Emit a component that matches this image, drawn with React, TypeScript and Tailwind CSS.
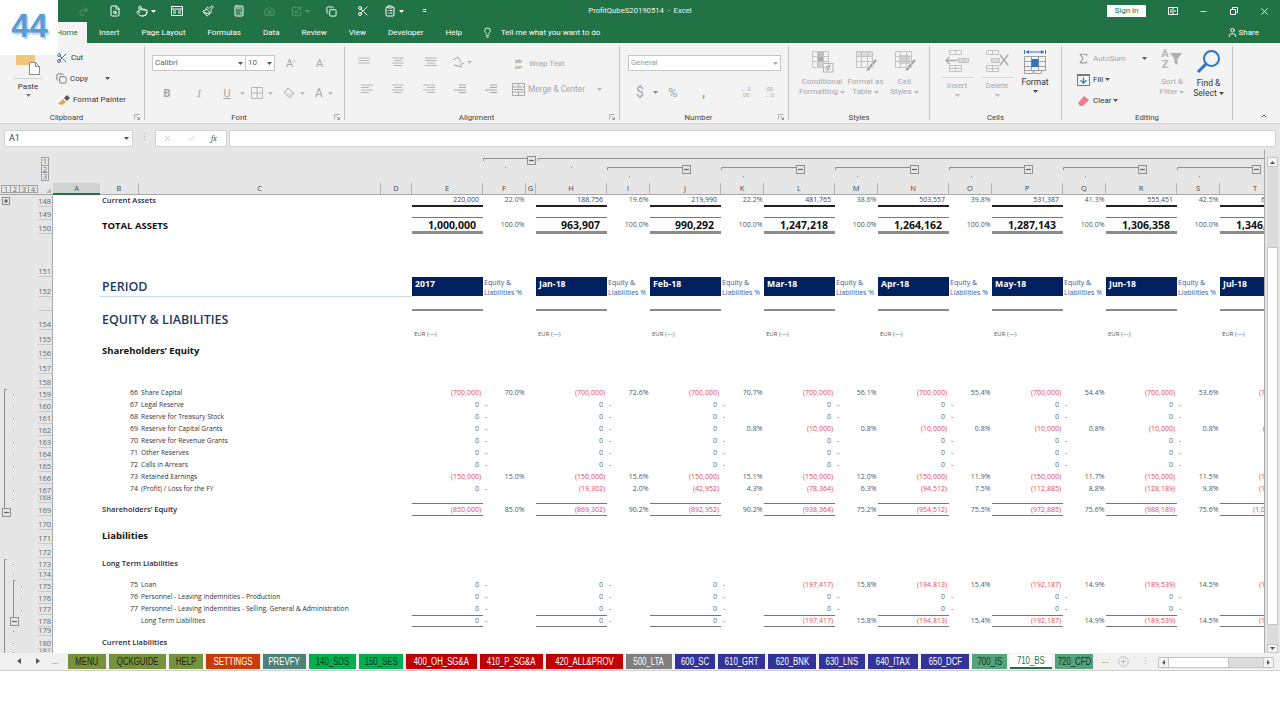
import React from 'react';
import {
  Scissors, Redo2, FileSearch, Pointer, Paintbrush, Calculator, Camera, Scaling, Copy, ClipboardList, Lightbulb, User,
  X, Minus, ChevronUp, Check, Sigma, ArrowDown,
} from 'lucide-react';

const GRID =
  'grid w-[1238px] shrink-0 grid-cols-[47px_39px_242px_31px_71px_43px_10px_71px_43px_71px_43px_71px_43px_71px_43px_71px_43px_71px_43px_71px]';
const DIS = 'text-[#a6a6a6]';

function Caret({ c = '#777' }: { c?: string }) {
  return (
    <svg width="5" height="3" viewBox="0 0 5 3" className="shrink-0">
      <path d="M0 0h5L2.5 3z" fill={c} />
    </svg>
  );
}

function Lines({ r, c = '#b4b4b4' }: { r: number[][]; c?: string }) {
  return (
    <svg width="14" height="11" viewBox="0 0 14 11">
      {r.map((p, i) => (
        <path key={i} d={`M${p[0]} ${i * 2.5 + 1}H${p[1]}`} stroke={c} strokeWidth="1" />
      ))}
    </svg>
  );
}

function Launcher() {
  return (
    <svg width="6" height="6" viewBox="0 0 6 6" className="absolute right-[4px] top-[3px]">
      <path d="M.5 5.5v-5h5" fill="none" stroke="#b0b0b0" />
      <path d="M2.5 2.5l3 3M5.5 3.5v2h-2" fill="none" stroke="#909090" />
    </svg>
  );
}

function Group({ w, label, launcher, children }: { w: string; label: string; launcher?: boolean; children: React.ReactNode }) {
  return (
    <div className={`${w} shrink-0 flex flex-col border-r border-[#c6c6c6]`}>
      <div className="flex-1 min-h-0">{children}</div>
      <div className={`relative h-[12px] mb-[-3px] text-center text-[7.8px] leading-[14px] text-[#444] ${launcher ? 'pr-[11px]' : ''}`}>
        {label}
        {launcher && <Launcher />}
      </div>
    </div>
  );
}

function TableBase({ children, stroke = '#c4c4c4', w = 24, h = 24 }: { children?: React.ReactNode; stroke?: string; w?: number; h?: number }) {
  return (
    <svg width={w} height={h} viewBox="0 0 24 24">
      {children}
      <path d="M2.5 2.5h16v16h-16zM2.5 7.5h16M2.5 12.5h16M7.5 2.5v16M13.5 2.5v16" fill="none" stroke={stroke} />
    </svg>
  );
}

function CondIcon() {
  return (
    <TableBase>
      <rect x="8" y="3" width="5" height="4" fill="#bdbdbd" />
      <rect x="8" y="8" width="5" height="4" fill="#a9a9a9" />
      <rect x="8" y="13" width="5" height="5" fill="#cfcfcf" />
      <rect x="13.5" y="14.5" width="9.5" height="8.5" fill="#f3f3f3" stroke="#b0b0b0" />
      <path d="M16 17.5h4.5M16 20h4.5M20 16l-3 6" stroke="#8f8f8f" fill="none" strokeWidth=".8" />
    </TableBase>
  );
}

function BrushTable({ solid }: { solid?: boolean }) {
  return (
    <TableBase>
      {solid ? (
        <rect x="6" y="6" width="11" height="9" fill="#cfcfcf" />
      ) : (
        <rect x="3" y="3" width="15" height="4.5" fill="#dcdcdc" />
      )}
      <path d="M22 11l-7 8" stroke="#a0a0a0" strokeWidth="2.2" />
      <path d="M15 18l-3 4 4-1.5z" fill="#8f8f8f" />
    </TableBase>
  );
}

function InsertIcon() {
  return (
    <svg width="26" height="24" viewBox="0 0 26 24">
      <path d="M5.5 1.5h12v4h-12zM11.5 1.5v4M5.5 16.5h12v6h-12zM5.5 19.5h12M11.5 16.5v6" fill="none" stroke="#c2c2c2" />
      <path d="M14.5 9.5h10v4h-10zM19.5 9.5v4" fill="#dcdcdc" stroke="#c2c2c2" />
      <path d="M13 11.5H2M5.5 8L2 11.5 5.5 15" fill="none" stroke="#a8a8a8" strokeWidth="1.4" />
    </svg>
  );
}

function DeleteIcon() {
  return (
    <svg width="26" height="24" viewBox="0 0 26 24">
      <path d="M2.5 1.5h12v4h-12zM8.5 1.5v4M2.5 16.5h12v6h-12zM2.5 19.5h12M8.5 16.5v6" fill="none" stroke="#c2c2c2" />
      <path d="M7.5 9.5h8v4h-8z" fill="#dcdcdc" stroke="#c2c2c2" />
      <path d="M16 6l8 10M24 6l-8 10" stroke="#a8a8a8" strokeWidth="1.4" />
    </svg>
  );
}

function FormatIcon() {
  return (
    <svg width="24" height="26" viewBox="0 0 24 26">
      <path d="M1.5 1v4M22.5 1v4M3 3h18" stroke="#2f75b5" fill="none" />
      <path d="M3 3l3-2v4zM21 3l-3-2v4z" fill="#2f75b5" />
      <path d="M1.5 7.5h21v14h-21zM1.5 12.5h21M1.5 17.5h21M8.5 7.5v14M15.5 7.5v14" fill="none" stroke="#8a8a8a" strokeWidth=".8" />
      <rect x="8.5" y="10" width="7" height="8" fill="#2f75b5" />
      <path d="M1.5 21.5v3h8l1-3M11 21.5v3h7l1-3" fill="none" stroke="#8a8a8a" strokeWidth=".8" />
    </svg>
  );
}

function ClipIcon() {
  return (
    <svg width="26" height="29" viewBox="0 0 26 29">
      <rect x="1" y="0" width="19" height="19" fill="#f0c67a" />
      <path d="M14.5 16.5h6l4 4v8h-10z" fill="#fff" stroke="#8a8a8a" />
      <path d="M20.5 16.5v4h4" fill="none" stroke="#8a8a8a" />
    </svg>
  );
}

function Painter() {
  return (
    <svg width="14" height="12" viewBox="0 0 14 12">
      <path d="M1 10l5-5 3 3-4 3z" fill="#e0a84a" />
      <path d="M7 4l3-3 3 3-3 3z" fill="#555" />
    </svg>
  );
}

function Magnifier() {
  return (
    <svg width="26" height="26" viewBox="0 0 26 26">
      <circle cx="15.5" cy="9.5" r="7.5" fill="none" stroke="#2f75b5" strokeWidth="2" />
      <path d="M10 15L2 23" stroke="#2f75b5" strokeWidth="3" />
    </svg>
  );
}

function SortIcon() {
  return (
    <div className="flex items-start h-[24px]">
      <div className="text-[11px] leading-[11px] font-bold text-[#b5b5b5] text-center">
        A<br />Z
      </div>
      <svg width="14" height="14" viewBox="0 0 14 14" className="mt-[4px]">
        <path d="M1 1h12L8.5 7v6L5.5 11V7z" fill="#b0b0b0" />
      </svg>
    </div>
  );
}

function Ribbon() {
  return (
    <div className="flex h-[81px] shrink-0 bg-[#f3f3f3] py-[3px] border-b border-[#d4d4d4] font-['Roboto',sans-serif]">
      <Group w="w-[145px]" label="Clipboard" launcher>
        <div className="flex h-full">
          <div className="w-[56px] flex flex-col items-center">
            <ClipIcon />
            <div className="w-[30px] h-px bg-[#d4d4d4] mt-[3px]" />
            <div className="text-[8px] leading-[11px] text-[#333] mt-[2px]">Paste</div>
            <div className="mt-[2px]"><Caret /></div>
          </div>
          <div className="flex flex-col pt-[1px] text-[8px] text-[#333]">
            <div className="h-[21px] flex items-center gap-[3px]">
              <Scissors size={12} className="text-[#3f6ea0]" /> <span>Cut</span>
            </div>
            <div className="h-[21px] flex items-center gap-[3px]">
              <Copy size={11} className="text-[#777]" /> <span>Copy</span>
              <span className="ml-[14px]"><Caret c="#555" /></span>
            </div>
            <div className="h-[21px] flex items-center gap-[1px]">
              <span className="ml-[1px]"><Painter /></span> <span className="ml-[1px]">Format Painter</span>
            </div>
          </div>
        </div>
      </Group>

      <Group w="w-[200px]" label="Font" launcher>
        <div className="flex pt-[9px] pl-[7px] items-center">
          <div className="w-[94px] h-[16px] bg-white border border-[#c6c6c6] flex items-center justify-between px-[2px] text-[8px] text-[#666]">
            Calibri <Caret c="#555" />
          </div>
          <div className="w-[29px] h-[16px] bg-white border border-l-0 border-[#c6c6c6] flex items-center justify-between px-[2px] text-[8px] text-[#666]">
            10 <Caret c="#555" />
          </div>
          <div className={`ml-[11px] w-[30px] text-[11px] leading-none ${DIS}`}>A<sup className="text-[5px]">^</sup></div>
          <div className={`w-[20px] text-[11px] leading-none ${DIS}`}>A<sup className="text-[5px]">ˇ</sup></div>
        </div>
        <div className={`flex items-center mt-[12px] h-[20px] ${DIS}`}>
          <div className="ml-[6px] w-[32px] text-center text-[11px] font-bold leading-none">B</div>
          <div className="w-[32px] text-center text-[11px] italic font-serif leading-none">I</div>
          <div className="w-[24px] text-center text-[11px] underline leading-none">U</div>
          <span className="ml-[1px]"><Caret c="#bbb" /></span>
          <svg width="12" height="12" viewBox="0 0 12 12" className="ml-[6px]">
            <path d="M.5.5h11v11H.5zM6 .5v11M.5 6h11" fill="none" stroke="#b8b8b8" />
          </svg>
          <span className="ml-[5px]"><Caret c="#bbb" /></span>
          <svg width="13" height="12" viewBox="0 0 13 12" className="ml-[10px]">
            <path d="M5 1l6 5-4 5-6-5z" fill="none" stroke="#aaa" />
            <path d="M1 6h9l-3 5z" fill="#ddd" />
          </svg>
          <span className="ml-[4px]"><Caret c="#bbb" /></span>
          <div className="ml-[10px] text-[12px] leading-none">A</div>
          <span className="ml-[5px]"><Caret c="#bbb" /></span>
        </div>
      </Group>

      <Group w="w-[275px]" label="Alignment" launcher>
        <div className="flex items-center h-[24px] mt-[4px]">
          <div className="ml-[12px] w-[34px]"><Lines r={[[1, 13], [2, 12], [1, 13]]} /></div>
          <div className="w-[33px]"><Lines r={[[1, 13], [3, 11], [1, 13], [3, 11]]} /></div>
          <div className="w-[24px]"><Lines r={[[1, 13], [1, 13], [3, 11], [1, 13]]} /></div>
          <svg width="14" height="12" viewBox="0 0 14 12" className="ml-[3px]">
            <path d="M2 4l5-3 3 6M9 9l4-2" fill="none" stroke="#aaa" />
            <path d="M3 9l8 2" stroke="#999" />
          </svg>
          <span className="ml-[2px]"><Caret c="#bbb" /></span>
          <div className="ml-[43px] mt-[4px] text-[6px] leading-[6px] text-[#999] w-[11px] font-bold">ab<br />c<span className="text-[5px]">↵</span></div>
          <div className={`ml-[3px] mt-[4px] text-[8px] ${DIS}`}>Wrap Text</div>
        </div>
        <div className="flex items-center h-[24px] mt-[3px]">
          <div className="ml-[15px] w-[31px]"><Lines r={[[1, 13], [1, 9], [1, 13], [1, 9]]} /></div>
          <div className="w-[31px]"><Lines r={[[1, 13], [3, 11], [1, 13], [3, 11]]} /></div>
          <div className="w-[31px]"><Lines r={[[1, 13], [5, 13], [1, 13], [5, 13]]} /></div>
          <div className="w-[31px]"><Lines r={[[6, 13], [6, 13], [1, 13], [6, 13]]} c="#a6a6a6" /></div>
          <div className="w-[22px]"><Lines r={[[6, 13], [6, 13], [1, 13], [6, 13]]} c="#a6a6a6" /></div>
          <svg width="13" height="13" viewBox="0 0 13 13" className="ml-[6px]">
            <path d="M.5.5h12v12H.5zM.5 4h12M.5 9h12M6.5.5V4M6.5 9v3.500" fill="none" stroke="#aaa" />
            <path d="M2 6.500h9" stroke="#999" />
          </svg>
          <div className={`ml-[3px] w-[69px] text-[8.3px] ${DIS}`}>Merge &amp; Center</div>
          <Caret c="#bbb" />
        </div>
      </Group>

      <Group w="w-[169px]" label="Number" launcher>
        <div className="ml-[8px] mt-[9px] w-[153px] h-[16px] bg-white border border-[#c6c6c6] flex items-center justify-between px-[2px] text-[7.8px] text-[#9a9a9a]">
          General <Caret c="#aaa" />
        </div>
        <div className={`flex items-center h-[20px] mt-[11px] ${DIS}`}>
          <div className="ml-[16px] w-[17px] text-[14px] leading-none">$</div>
          <Caret c="#888" />
          <div className="ml-[10px] w-[31px] text-[13px] leading-none">%</div>
          <div className="ml-[3px] w-[31px] text-[13px] font-bold leading-none text-[#999]">,</div>
          <div className="w-[31px] text-[5.500px] leading-[6px] text-center pr-[6px]">←.0<br />.00</div>
          <div className="text-[5.500px] leading-[6px] text-center">.00<br />→.0</div>
        </div>
      </Group>

      <Group w="w-[141px]" label="Styles">
        <div className={`flex pt-[3px] pl-[11px] text-[8px] leading-[10px] text-center ${DIS}`}>
          <div className="w-[44px] flex flex-col items-center">
            <CondIcon />
            <div className="mt-[4px]">Conditional</div>
            <div className="flex items-center gap-[2px] whitespace-nowrap">Formatting <Caret c="#bbb" /></div>
          </div>
          <div className="w-[43px] flex flex-col items-center">
            <BrushTable />
            <div className="mt-[4px]">Format as</div>
            <div className="flex items-center gap-[2px]">Table <Caret c="#bbb" /></div>
          </div>
          <div className="w-[35px] flex flex-col items-center">
            <BrushTable solid />
            <div className="mt-[4px]">Cell</div>
            <div className="flex items-center gap-[2px]">Styles <Caret c="#bbb" /></div>
          </div>
        </div>
      </Group>

      <Group w="w-[132px]" label="Cells">
        <div className="flex pt-[3px] pl-[6px] text-[8px] leading-[10px] text-center">
          <div className={`w-[42px] flex flex-col items-center ${DIS}`}>
            <InsertIcon />
            <div className="mt-[4px] w-[31px] border-t border-[#d8d8d8] pt-[3px]">Insert</div>
            <div className="mt-[3px]"><Caret c="#bbb" /></div>
          </div>
          <div className={`w-[38px] flex flex-col items-center ${DIS}`}>
            <DeleteIcon />
            <div className="mt-[4px] w-[31px] border-t border-[#d8d8d8] pt-[3px]">Delete</div>
            <div className="mt-[3px]"><Caret c="#bbb" /></div>
          </div>
          <div className="w-[38px] flex flex-col items-center text-[#333]">
            <FormatIcon />
            <div className="mt-[2px] text-[8.500px]">Format</div>
            <div className="mt-[3px]"><Caret c="#444" /></div>
          </div>
        </div>
      </Group>

      <Group w="w-[171px]" label="Editing">
        <div className="flex h-full">
          <div className="w-[92px] pl-[15px] pt-[2px] text-[8px] text-[#333]">
            <div className={`h-[21px] flex items-center ${DIS}`}>
              <Sigma size={13} className="text-[#a0a0a0]" />
              <span className="ml-[3px] w-[49px]">AutoSum</span>
              <Caret c="#555" />
            </div>
            <div className="h-[21px] flex items-center">
              <span className="w-[13px] h-[12px] border border-[#777] border-t-2 flex items-center justify-center">
                <ArrowDown size={9} strokeWidth={3} className="text-[#2f75b5]" />
              </span>
              <span className="ml-[3px]">Fill</span>
              <span className="ml-[2px]"><Caret c="#555" /></span>
            </div>
            <div className="h-[21px] flex items-center">
              <svg width="13" height="12" viewBox="0 0 13 12">
                <path d="M1 8l6-7 5 4-6 6H3z" fill="#ee7d8c" />
              </svg>
              <span className="ml-[3px]">Clear</span>
              <span className="ml-[2px]"><Caret c="#555" /></span>
            </div>
          </div>
          <div className={`w-[36px] pt-[2px] flex flex-col items-center text-[8px] leading-[10px] text-center ${DIS}`}>
            <SortIcon />
            <div className="mt-[5px]">Sort &amp;</div>
            <div className="flex items-center gap-[2px]">Filter <Caret c="#bbb" /></div>
          </div>
          <div className="w-[37px] pt-[3px] flex flex-col items-center text-[8.500px] leading-[10px] text-center text-[#333]">
            <Magnifier />
            <div className="mt-[3px]">Find &amp;</div>
            <div className="flex items-center gap-[2px]">Select <Caret c="#444" /></div>
          </div>
        </div>
      </Group>

      <div className="flex-1 flex justify-end items-end pr-[12px] mb-[-3px] pb-[3px]">
        <ChevronUp size={8} strokeWidth={3} className="text-[#555]" />
      </div>
    </div>
  );
}

function TitleBar() {
  const qat = 'w-[31px] flex justify-center items-center gap-[3px]';
  return (
    <div className="bg-[#217346] shrink-0 text-white font-['Roboto',sans-serif]">
      <div className="grid grid-cols-[1fr_auto_1fr] h-[22px] items-center">
        <div className="flex pl-[68px] items-center">
          <div className={qat}><Redo2 size={11} className="text-[#5c9a78]" /></div>
          <div className={qat}><FileSearch size={12} /></div>
          <div className={qat}><Pointer size={12} /><Caret c="#fff" /></div>
          <div className={qat}>
            <svg width="12" height="10" viewBox="0 0 12 10"><path d="M.5.5h11v9H.5zM.5 3h11" fill="none" stroke="#fff" /><path d="M2 5h3M7 5h3M2 7h3M7 7h3" stroke="#fff" /></svg>
          </div>
          <div className={qat}><Paintbrush size={12} /></div>
          <div className={qat}><Calculator size={12} /></div>
          <div className={qat}><Camera size={11} className="text-[#5c9a78]" /></div>
          <div className={qat}><Scaling size={11} className="text-[#5c9a78]" /><Caret c="#5c9a78" /></div>
          <div className={qat}><Copy size={11} /></div>
          <div className={qat}><Scissors size={12} /></div>
          <div className={qat}><ClipboardList size={12} /><Caret c="#fff" /></div>
          <div className={qat}><span className="text-[7px] leading-none font-bold">=</span></div>
        </div>
        <div className="text-[7.700px] leading-none text-[#eef5f0] text-center whitespace-pre">ProfitQubeS20190514  -  Excel</div>
        <div className="flex items-center justify-end">
          <div className="w-[39px] h-[12px] bg-white text-[#217346] text-[8px] leading-[12px] text-center">Sign in</div>
          <div className="w-[31px] ml-[11px] flex justify-center">
            <svg width="10" height="8" viewBox="0 0 10 8"><path d="M.5.5h9v7h-9zM5 .5v7" fill="none" stroke="#fff" /><path d="M2 3h2M2 5h2M6 4h2" stroke="#fff" /></svg>
          </div>
          <div className="w-[31px] flex justify-center"><Minus size={9} /></div>
          <div className="w-[30px] flex justify-center">
            <svg width="8" height="8" viewBox="0 0 8 8"><path d="M.5 2.500h5v5h-5zM2.500 2V.5h5v5H6" fill="none" stroke="#fff" /></svg>
          </div>
          <div className="w-[31px] flex justify-center"><X size={11} /></div>
        </div>
      </div>
      <div className="flex h-[21px] pl-[46px] items-center text-[8px] leading-none">
        <div className="w-[41px] h-full bg-[#f3f3f3] text-[#217346] flex items-center justify-center pl-[1px]">Home</div>
        <div className="ml-[12px] flex items-center gap-[22px]">
          <span>Insert</span>
          <span>Page Layout</span>
          <span>Formulas</span>
          <span>Data</span>
          <span>Review</span>
          <span>View</span>
          <span>Developer</span>
          <span>Help</span>
        </div>
        <Lightbulb size={11} className="ml-[20px]" />
        <span className="ml-[8px]">Tell me what you want to do</span>
        <div className="ml-auto mr-[21px] flex items-center gap-[1px]">
          <User size={11} /> <span>Share</span>
        </div>
      </div>
    </div>
  );
}

function FormulaBar() {
  return (
    <div className="h-[26px] shrink-0 flex items-start pt-[6px] pl-[4px] bg-[#e6e6e6] font-['Roboto',sans-serif]">
      <div className="w-[129px] h-[17px] bg-white border border-[#d4d4d4] flex items-center justify-between pl-[4px] pr-[3px] text-[9px] text-[#444]">
        A1 <Caret c="#555" />
      </div>
      <div className="w-[22px] text-center text-[9px] leading-[15px] text-[#aaa]">⋮</div>
      <div className="w-[72px] h-[17px] bg-white border border-[#d4d4d4] flex items-center text-[#aaa]">
        <X size={9} className="ml-[7px]" strokeWidth={1.5} />
        <Check size={9} className="ml-[15px]" strokeWidth={1.5} />
        <span className="ml-[15px] text-[8px] italic font-serif text-[#555]">fx</span>
      </div>
      <div className="w-[1047px] ml-[2px] h-[17px] bg-white border border-[#d4d4d4]" />
    </div>
  );
}

function OutlineBtn({ t, cls }: { t: string; cls: string }) {
  return <div className={`${cls} border border-[#a0a0a0] bg-[#e6e6e6] text-[7px] leading-[7px] text-center text-[#666]`}>{t}</div>;
}

function MinusBox({ x, y }: { x: number; y: number }) {
  return (
    <g>
      <rect x={x + 0.5} y={y + 0.5} width="8" height="8" fill="#e6e6e6" stroke="#8f8f8f" />
      <path d={`M${x + 2} ${y + 4.5}h5`} stroke="#666" strokeWidth="1.2" />
    </g>
  );
}

function Dot({ x, y }: { x: number; y: number }) {
  return <rect x={x} y={y} width="1" height="1" fill="#888" />;
}

function ColOutline() {
  const l2 = [607, 721, 835, 949, 1063, 1177];
  return (
    <svg width="1212" height="33" viewBox="53 150 1212 33" className="block shrink-0">
      <path d="M483.500 161V158.500H527M538 161V158.500H1265" fill="none" stroke="#8f8f8f" />
      <MinusBox x={527} y={156} />
      {l2.map((x) => (
        <g key={x}>
          <path d={`M${x + 0.5} 170V167.500H${x + 75}`} fill="none" stroke="#8f8f8f" />
          <MinusBox x={x + 75} y={165} />
          <Dot x={x + 22} y={176} />
        </g>
      ))}
      <Dot x={505} y={167} />
      <Dot x={571} y={167} />
    </svg>
  );
}

function RowOutline() {
  const d1 = [394, 406, 418, 430, 442, 454, 466, 478, 490, 499, 564, 574, 631, 643, 652];
  return (
    <svg width="38" height="458" viewBox="0 195 38 458" className="block shrink-0">
      <rect x="2.500" y="197.500" width="7" height="7" fill="#e6e6e6" stroke="#8f8f8f" />
      <path d="M4 201h4M6 199v4" stroke="#555" strokeWidth="1.2" />
      <path d="M6.500 389.500H4.500V508" fill="none" stroke="#8f8f8f" />
      <MinusBox x={2} y={508} />
      <path d="M6.500 559.500H4.500V653" fill="none" stroke="#8f8f8f" />
      <path d="M15.500 580.500H13.500V617" fill="none" stroke="#8f8f8f" />
      <MinusBox x={10} y={617} />
      {d1.map((y) => <Dot key={y} x={13} y={y} />)}
      {[586, 598, 610].map((y) => <Dot key={y} x={21} y={y} />)}
    </svg>
  );
}

const COLS = ['A', 'B', 'C', 'D', 'E', 'F', 'G', 'H', 'I', 'J', 'K', 'L', 'M', 'N', 'O', 'P', 'Q', 'R', 'S', 'T'];

function ColHeader() {
  return (
    <div className="flex h-[12px] shrink-0 border-b border-[#a8a8a8]">
      <div className="w-[53px] shrink-0 flex items-start pl-[1px] pt-[2px]">
        <div className="flex">
          {['1', '2', '3', '4'].map((t) => (
            <OutlineBtn key={t} t={t} cls="w-[10px] h-[8px] -ml-px first:ml-0" />
          ))}
        </div>
        <svg width="5" height="5" viewBox="0 0 5 5" className="ml-[8px] mt-[3px]"><path d="M5 0v5H0z" fill="#b8b8b8" /></svg>
      </div>
      <div className={GRID}>
        {COLS.map((c) =>
          c === 'A' ? (
            <div key={c} className="bg-[#d2d2d2] border-b-2 border-[#217346] text-center text-[7.5px] leading-[10px] text-[#217346]">{c}</div>
          ) : (
            <div key={c} className="border-r border-[#b4b4b4] text-center text-[7.5px] leading-[11px] text-[#444]">{c}</div>
          ),
        )}
      </div>
    </div>
  );
}

function Val({ v, big }: { v: string; big?: boolean }) {
  if (big) return <div className="pr-[7px] text-right text-[10.5px] font-bold text-[#111]">{v}</div>;
  if (v.startsWith('EUR')) return <div className="pl-[2px] text-[6px] text-[#555]">{v}</div>;
  if (v.startsWith('(')) return <div className="pr-[2px] text-right text-[#ef4444]">{v}</div>;
  if (v === '0') return <div className="pr-[4px] text-right text-[#5e6b60]">{v}</div>;
  return <div className="pr-[4px] text-right text-[#444]">{v}</div>;
}

type RowProps = {
  n?: string;
  h: string;
  lead?: React.ReactNode;
  leadCls?: string;
  vals?: string[];
  pcts?: string[];
  vc?: string;
  pc?: string;
  big?: boolean;
};

function Label({ n }: { n?: string }) {
  return (
    <div className="w-[15px] shrink-0 border-r border-[#a8a8a8] border-b-[#c8c8c8] border-b flex items-end justify-end pr-[1px] bg-[#e6e6e6] text-[7.5px] leading-[10px] text-[#666] overflow-hidden">
      {n}
    </div>
  );
}

function Row({ n, h, lead, leadCls = '', vals, pcts, vc = '', pc = '', big }: RowProps) {
  return (
    <div className={`flex shrink-0 ${h}`}>
      <Label n={n} />
      <div className={`${GRID} bg-white text-[7px]`}>
        <div className={`col-span-4 whitespace-nowrap ${leadCls}`}>{lead}</div>
        {vals &&
          vals.map((v, i) => (
            <React.Fragment key={i}>
              <div className={`whitespace-nowrap ${vc}`}><Val v={v} big={big} /></div>
              {i < 7 && (
                <div className={`whitespace-nowrap ${pc}`}>
                  {pcts && pcts[i] === '-' ? (
                    <div className="pl-[2px] text-[#555]">-</div>
                  ) : (
                    <div className="pr-[1.5px] text-right text-[#555]">{pcts ? pcts[i] : ''}</div>
                  )}
                </div>
              )}
              {i === 0 && <div />}
            </React.Fragment>
          ))}
      </div>
    </div>
  );
}

function Item({ num, text }: { num?: string; text: string }) {
  return (
    <div className="flex leading-[9px] text-[#333]">
      <div className="w-[86px] pr-[1px] text-right text-[7px]">{num}</div>
      <div className="pl-[2px] text-[6.7px]">{text}</div>
    </div>
  );
}

const Z8 = ['0', '0', '0', '0', '0', '0', '0', '0'];
const D7 = ['-', '-', '-', '-', '-', '-', '-'];
const L = 'leading-[9px]';
const STD = { vc: L, pc: L, vals: Z8, pcts: D7 };
const B8 = 'pl-[49px] text-[7.6px] font-semibold text-[#1f2a44]';
const BOLD10 = 'pl-[49px] text-[9.5px] font-bold text-[#111] leading-[12px]';
const HEAD = 'pl-[49px] text-[12.5px] font-semibold text-[#1f3864]';
const MONTHS = ['2017', 'Jan-18', 'Feb-18', 'Mar-18', 'Apr-18', 'May-18', 'Jun-18', 'Jul-18'];

function PeriodRow() {
  return (
    <div className="flex shrink-0 h-[20px]">
      <Label n="152" />
      <div className={`${GRID} bg-white`}>
        <div className="col-span-4 pl-[47px]">
          <div className="h-[20px] border-b border-[#c5daf0] pl-[2px] text-[12.5px] leading-[20px] font-semibold text-[#1f3864]">PERIOD</div>
        </div>
        {MONTHS.map((m, i) => (
          <React.Fragment key={m}>
            <div className="h-[19px] bg-[#002060] text-white font-bold text-[8.700px] leading-[14px] pl-[3px]">{m}</div>
            {i < 7 && (
              <div className="pl-[1px] pt-[1px] text-[7px] leading-[9.5px] text-[#35609f] whitespace-nowrap">
                Equity &amp;<br />Liabilities %
              </div>
            )}
            {i === 0 && <div />}
          </React.Fragment>
        ))}
      </div>
    </div>
  );
}

function Sheet() {
  const p159 = ['70.0%', '72.6%', '70.7%', '56.1%', '55.4%', '54.4%', '53.6%'];
  const v159 = Array(8).fill('(700,000)') as string[];
  const v166 = Array(8).fill('(150,000)') as string[];
  const v162 = ['0', '0', '0', '(10,000)', '(10,000)', '(10,000)', '(10,000)', '(10,000)'];
  const v175 = ['0', '0', '0', '(197,417)', '(194,813)', '(192,187)', '(189,539)', '(186,843)'];
  const p175 = ['-', '-', '-', '15.8%', '15.4%', '14.9%', '14.5%'];
  const blank = Array(8).fill('') as string[];
  return (
    <div className="flex h-[458px] shrink-0 overflow-hidden">
      <RowOutline />
      <div className="flex flex-col overflow-hidden">
        <Row n="148" h="h-[12px]" lead="Current Assets" leadCls={`${B8} leading-[10px]`}
          vals={['220,000', '188,756', '219,990', '481,765', '503,557', '531,387', '555,451', '603,880']}
          pcts={['22.0%', '19.6%', '22.2%', '38.6%', '39.8%', '41.3%', '42.5%']}
          vc="border-b-2 border-[#222] leading-[10px]" pc="leading-[10px]" />
        <Row n="149" h="h-[13px]" vals={blank} vc="h-[11px] border-b border-[#777]" />
        <Row n="150" h="h-[14px]" lead="TOTAL ASSETS" leadCls="pl-[49px] text-[9.5px] font-bold text-[#111] leading-[12px]"
          big
          vals={['1,000,000', '963,907', '990,292', '1,247,218', '1,264,162', '1,287,143', '1,306,358', '1,346,220']}
          pcts={['100.0%', '100.0%', '100.0%', '100.0%', '100.0%', '100.0%', '100.0%']}
          vc="border-b-[3px] border-[#8c8c8c] leading-[10px]" pc="leading-[9px]" />
        <Row n="151" h="h-[43px]" />
        <PeriodRow />
        <Row h="h-[14px]" vals={blank} vc="border-b-2 border-[#8c8c8c] h-[14px]" />
        <Row n="154" h="h-[19px]" lead="EQUITY & LIABILITIES" leadCls={`${HEAD} leading-[18px]`} />
        <Row n="155" h="h-[15px]" vals={Array(8).fill('EUR (—)') as string[]} vc="leading-[8px]" />
        <Row n="156" h="h-[14px]" lead="Shareholders’ Equity" leadCls={BOLD10} />
        <Row n="157" h="h-[15px]" />
        <Row n="158" h="h-[14px]" />
        <Row n="159" h="h-[12px]" lead={<Item num="66" text="Share Capital" />} {...STD} vals={v159} pcts={p159} />
        <Row n="160" h="h-[12px]" lead={<Item num="67" text="Legal Reserve" />} {...STD} />
        <Row n="161" h="h-[12px]" lead={<Item num="68" text="Reserve for Treasury Stock" />} {...STD} />
        <Row n="162" h="h-[12px]" lead={<Item num="69" text="Reserve for Capital Grants" />} {...STD} vals={v162} pcts={['-', '-', '0.8%', '0.8%', '0.8%', '0.8%', '0.8%']} />
        <Row n="163" h="h-[12px]" lead={<Item num="70" text="Reserve for Revenue Grants" />} {...STD} />
        <Row n="164" h="h-[12px]" lead={<Item num="71" text="Other Reserves" />} {...STD} />
        <Row n="165" h="h-[12px]" lead={<Item num="72" text="Calls in Arrears" />} {...STD} />
        <Row n="166" h="h-[12px]" lead={<Item num="73" text="Retained Earnings" />} {...STD} vals={v166} pcts={['15.0%', '15.6%', '15.1%', '12.0%', '11.9%', '11.7%', '11.5%']} />
        <Row n="167" h="h-[12px]" lead={<Item num="74" text="(Profit) / Loss for the FY" />} {...STD}
          vals={['0', '(19,302)', '(42,952)', '(78,364)', '(94,512)', '(112,885)', '(128,189)', '(148,000)']}
          pcts={['-', '2.0%', '4.3%', '6.3%', '7.5%', '8.8%', '9.8%']} />
        <Row n="168" h="h-[7px]" />
        <Row n="169" h="h-[13px]" lead="Shareholders’ Equity" leadCls={`${B8} leading-[13px]`}
          vals={['(850,000)', '(869,302)', '(892,952)', '(938,364)', '(954,512)', '(972,885)', '(988,189)', '(1,008,000)']}
          pcts={['85.0%', '90.2%', '90.2%', '75.2%', '75.5%', '75.6%', '75.6%']} vc="border-t border-b border-[#777] leading-[11px]" pc="leading-[13px]" />
        <Row n="170" h="h-[14px]" />
        <Row n="171" h="h-[14px]" lead="Liabilities" leadCls={BOLD10} />
        <Row n="172" h="h-[14px]" />
        <Row n="173" h="h-[12px]" lead="Long Term Liabilities" leadCls={`${B8} leading-[10px]`} />
        <Row n="174" h="h-[10px]" />
        <Row n="175" h="h-[12px]" lead={<Item num="75" text="Loan" />} {...STD} vals={v175} pcts={p175} />
        <Row n="176" h="h-[12px]" lead={<Item num="76" text="Personnel - Leaving Indemnities - Production" />} {...STD} />
        <Row n="177" h="h-[11px]" lead={<Item num="77" text="Personnel - Leaving Indemnities - Selling, General & Administration" />} {...STD} />
        <Row n="178" h="h-[12px]" lead={<Item text="Long Term Liabilities" />}
          vals={v175} pcts={p175} vc="border-t border-b border-[#777] leading-[9px]" pc="leading-[11px]" leadCls="pt-[1px]" />
        <Row n="179" h="h-[9px]" />
        <Row n="180" h="h-[13px]" lead="Current Liabilities" leadCls={`${B8} leading-[12px]`} />
        <Row n="181" h="h-[6px]" />
      </div>
    </div>
  );
}

const TABS: [string, string, string][] = [
  ['MENU', 'w-[38px]', 'bg-[#76923c] text-[#1f240f]'],
  ['QCKGUIDE', 'w-[57px]', 'bg-[#76923c] text-[#1f240f]'],
  ['HELP', 'w-[34px]', 'bg-[#76923c] text-[#1f240f]'],
  ['SETTINGS', 'w-[54px]', 'bg-[#cc3a06] text-white'],
  ['PREVFY', 'w-[43px]', 'bg-[#4f8176] text-white'],
  ['140_SDS', 'w-[47px]', 'bg-[#00b050] text-[#10331f]'],
  ['150_SES', 'w-[44px]', 'bg-[#00b050] text-[#10331f]'],
  ['400_OH_SG&A', 'w-[71px]', 'bg-[#c00000] text-white'],
  ['410_P_SG&A', 'w-[63px]', 'bg-[#c00000] text-white'],
  ['420_ALL&PROV', 'w-[77px]', 'bg-[#c00000] text-white'],
  ['500_LTA', 'w-[46px]', 'bg-[#7f7f7f] text-white'],
  ['600_SC', 'w-[40px]', 'bg-[#333399] text-white'],
  ['610_GRT', 'w-[47px]', 'bg-[#333399] text-white'],
  ['620_BNK', 'w-[48px]', 'bg-[#333399] text-white'],
  ['630_LNS', 'w-[46px]', 'bg-[#333399] text-white'],
  ['640_ITAX', 'w-[50px]', 'bg-[#333399] text-white'],
  ['650_DCF', 'w-[48px]', 'bg-[#333399] text-white'],
  ['700_IS', 'w-[35px]', 'bg-[#55a37c] text-[#10331f]'],
  ['710_BS', 'w-[42px]', 'bg-white text-[#217346] border-b-2 border-[#217346]'],
  ['720_CFD', 'w-[38px]', 'bg-[#55a37c] text-[#10331f]'],
];

function SheetTabs() {
  return (
    <div className="h-[18px] shrink-0 flex items-start bg-[#f1f1f1] border-b border-[#cfcfcf] pt-[1px]">
      <div className="w-[68px] shrink-0 h-[14px] flex items-center text-[#555]">
        <svg width="4" height="6" viewBox="0 0 4 6" className="ml-[17px]"><path d="M4 0v6L0 3z" fill="#555" /></svg>
        <svg width="4" height="6" viewBox="0 0 4 6" className="ml-[15px]"><path d="M0 0v6l4-3z" fill="#555" /></svg>
        <span className="ml-[12px] text-[8px] leading-none">...</span>
      </div>
      <div className="flex gap-[3px] w-[1025px] shrink-0 overflow-hidden">
        {TABS.map(([t, w, c]) => (
          <div key={t} className={`${w} ${c} shrink-0 h-[15px] flex items-center justify-center overflow-hidden whitespace-nowrap`}>
            <span className="text-[10px] leading-none scale-x-[0.78] font-['Liberation_Sans',sans-serif]">{t}</span>
          </div>
        ))}
      </div>
      <span className="ml-[9px] text-[8px] leading-[12px] text-[#555]">...</span>
      <svg width="11" height="11" viewBox="0 0 11 11" className="ml-[10px] mt-[2px]">
        <circle cx="5.500" cy="5.500" r="4.800" fill="none" stroke="#c0c0c0" />
        <path d="M5.500 2.500v6M2.500 5.500h6" stroke="#c0c0c0" />
      </svg>
      <span className="ml-[12px] text-[9px] leading-[14px] text-[#b0b0b0]">⋮</span>
      <div className="ml-[8px] flex h-[11px] mt-[3px] w-[116px] border border-[#c4c4c4] bg-[#dcdcdc]">
        <div className="w-[10px] border-r border-[#c4c4c4] bg-[#f4f4f4] flex items-center justify-center">
          <svg width="3" height="5" viewBox="0 0 3 5"><path d="M3 0v5L0 2.500z" fill="#555" /></svg>
        </div>
        <div className="w-[60px] bg-white border-r border-[#c4c4c4]" />
        <div className="flex-1" />
        <div className="w-[10px] border-l border-[#c4c4c4] bg-[#f4f4f4] flex items-center justify-center">
          <svg width="3" height="5" viewBox="0 0 3 5"><path d="M0 0v5l3-2.500z" fill="#555" /></svg>
        </div>
      </div>
    </div>
  );
}

function VScroll() {
  return (
    <div className="w-[15px] shrink-0 pl-[2px] pr-[2px] pt-[7px] h-[503px] flex flex-col">
      <div className="h-[10px] bg-[#f4f4f4] border border-[#c4c4c4] flex items-center justify-center">
        <svg width="5" height="3" viewBox="0 0 5 3"><path d="M0 3h5L2.500 0z" fill="#555" /></svg>
      </div>
      <div className="h-[80px] bg-[#dcdcdc]" />
      <div className="h-[378px] bg-white border border-[#c4c4c4]" />
      <div className="flex-1 bg-[#dcdcdc]" />
      <div className="h-[9px] bg-[#f4f4f4] border border-[#c4c4c4] flex items-center justify-center">
        <svg width="5" height="3" viewBox="0 0 5 3"><path d="M0 0h5L2.500 3z" fill="#555" /></svg>
      </div>
    </div>
  );
}

export default function App() {
  return (
    <div className="relative flex flex-col w-[1280px] h-[720px] overflow-hidden bg-white font-['Open_Sans',sans-serif]">
      <TitleBar />
      <Ribbon />
      <FormulaBar />
      <div className="flex h-[503px] shrink-0 bg-[#e6e6e6]">
        <div className="w-[1265px] shrink-0 flex flex-col overflow-hidden border-r border-[#a8a8a8]">
          <div className="flex h-[33px] shrink-0">
            <div className="w-[53px] shrink-0 pl-[41px] pt-[7px]">
              {['1', '2', '3'].map((t) => (
                <OutlineBtn key={t} t={t} cls="w-[8px] h-[8.500px] -mb-px" />
              ))}
            </div>
            <ColOutline />
          </div>
          <ColHeader />
          <Sheet />
        </div>
        <VScroll />
      </div>
      <SheetTabs />
      <div className="absolute left-0 top-0 w-[58px] h-[55px] bg-white flex items-center justify-center pb-[5px] pl-[1px]">
        <span className="text-[33px] leading-none font-bold text-[#5b9bd5] font-['Liberation_Sans',sans-serif] [text-shadow:1.5px_1.5px_0_#bcd6ee]">44</span>
      </div>
    </div>
  );
}
